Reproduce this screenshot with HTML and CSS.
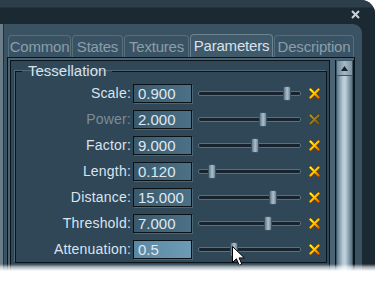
FILE: index.html
```html
<!DOCTYPE html>
<html lang="en">
<head>
  <meta charset="UTF-8">
  <title>Parameters</title>
  <link rel="stylesheet" href="styles.css">
</head>
<body>
  <svg class="defs" width="0" height="0">
    <defs>
      <linearGradient id="xg" x1="0" y1="0" x2="1" y2="1">
        <stop offset="0" stop-color="#fff43a"/>
        <stop offset="0.5" stop-color="#ffc400"/>
        <stop offset="1" stop-color="#f06a00"/>
      </linearGradient>
      <linearGradient id="xd" x1="0" y1="0" x2="1" y2="1">
        <stop offset="0" stop-color="#a69a36"/>
        <stop offset="1" stop-color="#7a5a1c"/>
      </linearGradient>
    </defs>
  </svg>

  <div class="window">
    <div class="titlebar">
      <svg class="close" width="9" height="9" viewBox="0 0 9 9"><path d="M1 1L8 8M8 1L1 8" stroke="#c9d3da" stroke-width="2"/></svg>
    </div>

    <div class="frame">
      <div class="tabs">
        <div class="tab w-common">Common</div>
        <div class="tab w-states">States</div>
        <div class="tab w-textures">Textures</div>
        <div class="tab w-params active">Parameters</div>
        <div class="tab w-desc">Description</div>
      </div>

      <div class="panel">
        <div class="content">
          <fieldset class="group">
            <legend>Tessellation</legend>

            <div class="row">
              <label>Scale:</label>
              <div class="field">0.900</div>
              <div class="slider"><div class="track"></div><div class="thumb" style="left:85px"></div></div>
              <svg class="reset" width="11" height="11" viewBox="0 0 11 11"><path d="M1.5 1.5L9.5 9.5M9.5 1.5L1.5 9.5" stroke="#7a3300" stroke-width="3.4" stroke-linecap="round"/><path d="M1.5 1.5L9.5 9.5M9.5 1.5L1.5 9.5" stroke="url(#xg)" stroke-width="2.2" stroke-linecap="round"/></svg>
            </div>

            <div class="row">
              <label class="dim">Power:</label>
              <div class="field">2.000</div>
              <div class="slider"><div class="track"></div><div class="thumb" style="left:61px"></div></div>
              <svg class="reset" width="11" height="11" viewBox="0 0 11 11"><path d="M1.5 1.5L9.5 9.5M9.5 1.5L1.5 9.5" stroke="#3e3414" stroke-width="3.4" stroke-linecap="round"/><path d="M1.5 1.5L9.5 9.5M9.5 1.5L1.5 9.5" stroke="url(#xd)" stroke-width="2.2" stroke-linecap="round"/></svg>
            </div>

            <div class="row">
              <label>Factor:</label>
              <div class="field">9.000</div>
              <div class="slider"><div class="track"></div><div class="thumb" style="left:53px"></div></div>
              <svg class="reset" width="11" height="11" viewBox="0 0 11 11"><path d="M1.5 1.5L9.5 9.5M9.5 1.5L1.5 9.5" stroke="#7a3300" stroke-width="3.4" stroke-linecap="round"/><path d="M1.5 1.5L9.5 9.5M9.5 1.5L1.5 9.5" stroke="url(#xg)" stroke-width="2.2" stroke-linecap="round"/></svg>
            </div>

            <div class="row">
              <label>Length:</label>
              <div class="field">0.120</div>
              <div class="slider"><div class="track"></div><div class="thumb" style="left:10px"></div></div>
              <svg class="reset" width="11" height="11" viewBox="0 0 11 11"><path d="M1.5 1.5L9.5 9.5M9.5 1.5L1.5 9.5" stroke="#7a3300" stroke-width="3.4" stroke-linecap="round"/><path d="M1.5 1.5L9.5 9.5M9.5 1.5L1.5 9.5" stroke="url(#xg)" stroke-width="2.2" stroke-linecap="round"/></svg>
            </div>

            <div class="row">
              <label>Distance:</label>
              <div class="field">15.000</div>
              <div class="slider"><div class="track"></div><div class="thumb" style="left:71px"></div></div>
              <svg class="reset" width="11" height="11" viewBox="0 0 11 11"><path d="M1.5 1.5L9.5 9.5M9.5 1.5L1.5 9.5" stroke="#7a3300" stroke-width="3.4" stroke-linecap="round"/><path d="M1.5 1.5L9.5 9.5M9.5 1.5L1.5 9.5" stroke="url(#xg)" stroke-width="2.2" stroke-linecap="round"/></svg>
            </div>

            <div class="row">
              <label>Threshold:</label>
              <div class="field">7.000</div>
              <div class="slider"><div class="track"></div><div class="thumb" style="left:66px"></div></div>
              <svg class="reset" width="11" height="11" viewBox="0 0 11 11"><path d="M1.5 1.5L9.5 9.5M9.5 1.5L1.5 9.5" stroke="#7a3300" stroke-width="3.4" stroke-linecap="round"/><path d="M1.5 1.5L9.5 9.5M9.5 1.5L1.5 9.5" stroke="url(#xg)" stroke-width="2.2" stroke-linecap="round"/></svg>
            </div>

            <div class="row">
              <label>Attenuation:</label>
              <div class="field focused">0.5</div>
              <div class="slider"><div class="track"></div><div class="thumb" style="left:32px"></div></div>
              <svg class="reset" width="11" height="11" viewBox="0 0 11 11"><path d="M1.5 1.5L9.5 9.5M9.5 1.5L1.5 9.5" stroke="#7a3300" stroke-width="3.4" stroke-linecap="round"/><path d="M1.5 1.5L9.5 9.5M9.5 1.5L1.5 9.5" stroke="url(#xg)" stroke-width="2.2" stroke-linecap="round"/></svg>
            </div>
          </fieldset>
        </div>

        <div class="scrollbar">
          <div class="sb-up"><svg width="7" height="5" viewBox="0 0 7 5"><path d="M3.5 0L7 5H0Z" fill="#15222a"/></svg></div>
          <div class="sb-thumb"></div>
        </div>
      </div>
    </div>

    <svg class="cursor" width="14" height="21" viewBox="0 0 14 21"><path d="M0.5 0.5V16.5L4.4 12.8L7.2 19.2L9.8 18.1L7.1 11.9H12.4Z" fill="#fff" stroke="#000" stroke-width="1"/></svg>
  </div>
</body>
</html>
```

FILE: styles.css
```css
body { margin: 0; background: #fff; font-family: "Liberation Sans", Arial, sans-serif; }
.defs { position: absolute; }

.window { position: relative; width: 375px; height: 281px; overflow: hidden; background: #1b2932; border-top-right-radius: 14px; }
.window::after { content: ""; position: absolute; left: 0; right: 0; bottom: 0; height: 17px; background: linear-gradient(to bottom, rgba(255,255,255,0) 0, rgba(255,255,255,0.6) 3px, #fff 7px); }

.titlebar { height: 24px; box-sizing: border-box; padding: 4px 15px 0 0; display: flex; justify-content: flex-end; align-items: center; background: linear-gradient(to bottom, #2c3e49 0, #2c3e49 7px, #1b2932 8px); }

.frame { height: 257px; margin-right: 13px; box-sizing: border-box; padding: 10px 7px 0 4px; background: #3a5262; border-left: 3px solid #6b7d88; border-top-right-radius: 9px; box-shadow: inset 1px 0 0 #22313a; }

.tabs { display: flex; align-items: flex-end; gap: 1px; height: 23px; margin-left: 1px; }
.tab { height: 22px; box-sizing: border-box; border: 1px solid #566e7c; border-bottom: none; border-radius: 4px 4px 0 0; background: #3a5364; color: #8a9eaa; font-size: 15px; letter-spacing: -0.2px; line-height: 22px; text-align: center; }
.tab.active { height: 23px; background: #405a6a; border-color: #6b8492; color: #d8e2ef; }
.w-common { width: 63px; }
.w-states { width: 51px; }
.w-textures { width: 65px; }
.w-params { width: 83px; }
.w-desc { width: 80px; }

.panel { display: flex; height: 224px; box-sizing: border-box; border: 1px solid #0b1419; border-bottom: none; background: #4b6372; padding: 2px 0 0 2px; }
.content { width: 320px; box-sizing: border-box; border: 1px solid #0b1419; background: #2f4757; padding: 2px 0 0 4px; }

.group { margin: 0 2px 0 0; padding: 1px 0 0 0; border: 1px solid #0b1419; box-shadow: -1px -1px 0 #4f6876; }
.group legend { margin-left: 6px; padding: 0 6px; font-size: 15px; line-height: 16px; color: #d8e2ee; }

.row { display: flex; align-items: center; height: 26px; }
.row label { width: 115px; text-align: right; font-size: 14px; letter-spacing: 0.2px; color: #dbe3f0; }
.row label.dim { color: #7c8d97; }
.field { width: 59px; height: 19px; margin-left: 2px; box-sizing: border-box; border: 1px solid #0a1216; padding-left: 4px; background: linear-gradient(to right, #3a596b, #4c7186); color: #dfe8f2; font-size: 15px; line-height: 17px; box-shadow: 1px 1px 0 #4d6676; }
.field.focused { background: linear-gradient(to right, #5a88a2, #6e9bb4); }

.slider { position: relative; display: flex; align-items: center; width: 103px; height: 19px; margin-left: 6px; }
.track { width: 100%; height: 5px; box-sizing: border-box; border: 1px solid #587180; border-radius: 2px; background: #17242d; }
.thumb { position: absolute; top: 2px; width: 8px; height: 15px; box-sizing: border-box; border: 1px solid #3c5262; border-radius: 2px; background: linear-gradient(to right, #5f7888, #9ab0bf 40%, #a9bdca 55%, #6d8696); }

.reset { margin-left: 8px; }

.scrollbar { width: 19px; margin-left: 5px; box-sizing: border-box; border-left: 1px solid #0b1419; border-right: 1px solid #0b1419; padding: 1px 1px 0; background: #3d5666; display: flex; flex-direction: column; gap: 1px; }
.sb-up { height: 14px; display: flex; align-items: center; justify-content: center; background: linear-gradient(to right, #6f8897, #a6b9c5 50%, #7c94a3); }
.sb-thumb { flex: 1; background: linear-gradient(to right, #5b7383, #8ba3b1 20%, #b9cad5 40%, #c2d2dc 55%, #8ea5b3 75%, #5a7282); }

.cursor { position: absolute; left: 232px; top: 246px; }
```
